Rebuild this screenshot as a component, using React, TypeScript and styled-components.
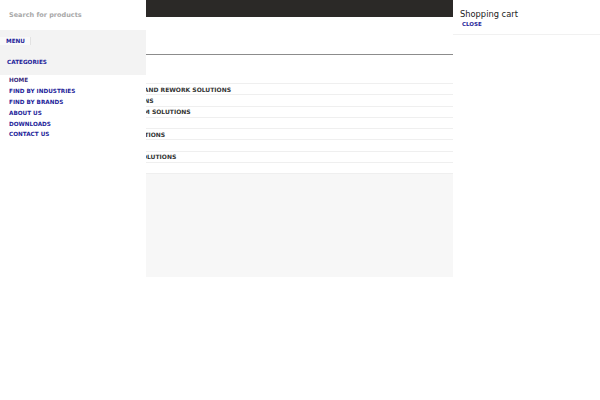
import * as React from "react";
import styled, { createGlobalStyle } from "styled-components";

const GlobalStyle = createGlobalStyle`
  html, body {
    margin: 0;
    padding: 0;
    background: #ffffff;
  }
  body {
    font-family: "DejaVu Sans", "Liberation Sans", sans-serif;
  }
`;

// the open drawer covers the start of these rows
const categories = [
  "SOLDERING, DESOLDERING AND REWORK SOLUTIONS",
  "MICROSCOPES & INSPECTIONS",
  "ESD CONTROL & CLEANROOM SOLUTIONS",
  "HAND TOOLS",
  "COATING AND DRYING SOLUTIONS",
  "CONSUMABLES",
  "AUTOMATED DISPENSING SOLUTIONS",
  "ACCESSORIES",
];

const menuLinks = [
  { label: "HOME", visited: true },
  { label: "FIND BY INDUSTRIES" },
  { label: "FIND BY BRANDS" },
  { label: "ABOUT US" },
  { label: "DOWNLOADS" },
  { label: "CONTACT US" },
];

export default function App() {
  return (
    <>
      <GlobalStyle />
      <Page>
        <TopBar />
        <Header />
        <CategoryList>
          {categories.map((c) => (
            <CategoryRow key={c}>{c}</CategoryRow>
          ))}
        </CategoryList>
        <Banner />
      </Page>

      <SideMenu>
        <SearchBox>Search for products</SearchBox>
        <TabArea>
          <MenuTab>MENU</MenuTab>
          <CategoriesTab>CATEGORIES</CategoriesTab>
        </TabArea>
        <MenuList>
          {menuLinks.map((m) => (
            <MenuItem key={m.label} $visited={m.visited}>
              {m.label}
            </MenuItem>
          ))}
        </MenuList>
      </SideMenu>

      <CartPanel>
        <CartHead>
          <CartTitle>Shopping cart</CartTitle>
          <CloseLink>CLOSE</CloseLink>
        </CartHead>
      </CartPanel>
    </>
  );
}

const Page = styled.div`
  width: 453px;
  display: flex;
  flex-direction: column;
`;

const TopBar = styled.div`
  height: 17px;
  background: #2b2927;
`;

const Header = styled.div`
  height: 37px;
  border-bottom: 1px solid #8c8c8c;
`;

const CategoryList = styled.div`
  margin-top: 28px;
  border-top: 1px solid #efefef;
  display: flex;
  flex-direction: column;
`;

const CategoryRow = styled.div`
  box-sizing: border-box;
  height: 11.25px;
  border-bottom: 1px solid #efefef;
  padding-left: 50px;
  display: flex;
  align-items: center;
  font-size: 6px;
  font-weight: 700;
  color: #333333;
  white-space: nowrap;
`;

const Banner = styled.div`
  height: 103px;
  background: #f7f7f7;
`;

const SideMenu = styled.aside`
  position: fixed;
  top: 0;
  left: 0;
  width: 146px;
  height: 100%;
  background: #ffffff;
  display: flex;
  flex-direction: column;
  z-index: 10;
`;

const SearchBox = styled.div`
  height: 30px;
  padding-left: 9px;
  display: flex;
  align-items: center;
  font-size: 6.5px;
  font-weight: 700;
  color: #a8a8a8;
`;

const TabArea = styled.div`
  height: 45px;
  background: #f3f3f3;
  display: flex;
  flex-direction: column;
  align-items: flex-start;
`;

const MenuTab = styled.div`
  margin-top: 7px;
  width: 31px;
  height: 8px;
  box-sizing: border-box;
  padding-left: 6px;
  background: #f9f9f9;
  border-right: 1px solid #e2e2e2;
  display: flex;
  align-items: center;
  font-size: 5.7px;
  font-weight: 700;
  color: #1f1f9a;
`;

const CategoriesTab = styled.div`
  margin-top: 14px;
  padding-left: 7px;
  font-size: 5.7px;
  font-weight: 700;
  color: #1f1f9a;
`;

const MenuList = styled.nav`
  display: flex;
  flex-direction: column;
`;

const MenuItem = styled.a<{ $visited?: boolean }>`
  height: 10.8px;
  padding-left: 9px;
  display: flex;
  align-items: center;
  font-size: 5.7px;
  font-weight: 700;
  color: ${(p) => (p.$visited ? "#3d2d7e" : "#1f1f9a")};
  cursor: pointer;
`;

const CartPanel = styled.aside`
  position: fixed;
  top: 0;
  right: 0;
  width: 147px;
  height: 100%;
  background: #ffffff;
  z-index: 10;
`;

const CartHead = styled.div`
  height: 35px;
  box-sizing: border-box;
  padding: 9px 0 0 7px;
  border-bottom: 1px solid #f1f1f1;
  display: flex;
  flex-direction: column;
`;

const CartTitle = styled.div`
  font-size: 8.3px;
  line-height: 11px;
  color: #222222;
`;

const CloseLink = styled.a`
  margin-left: 2px;
  font-size: 5.5px;
  line-height: 8px;
  font-weight: 700;
  color: #1f1f9a;
  cursor: pointer;
`;
